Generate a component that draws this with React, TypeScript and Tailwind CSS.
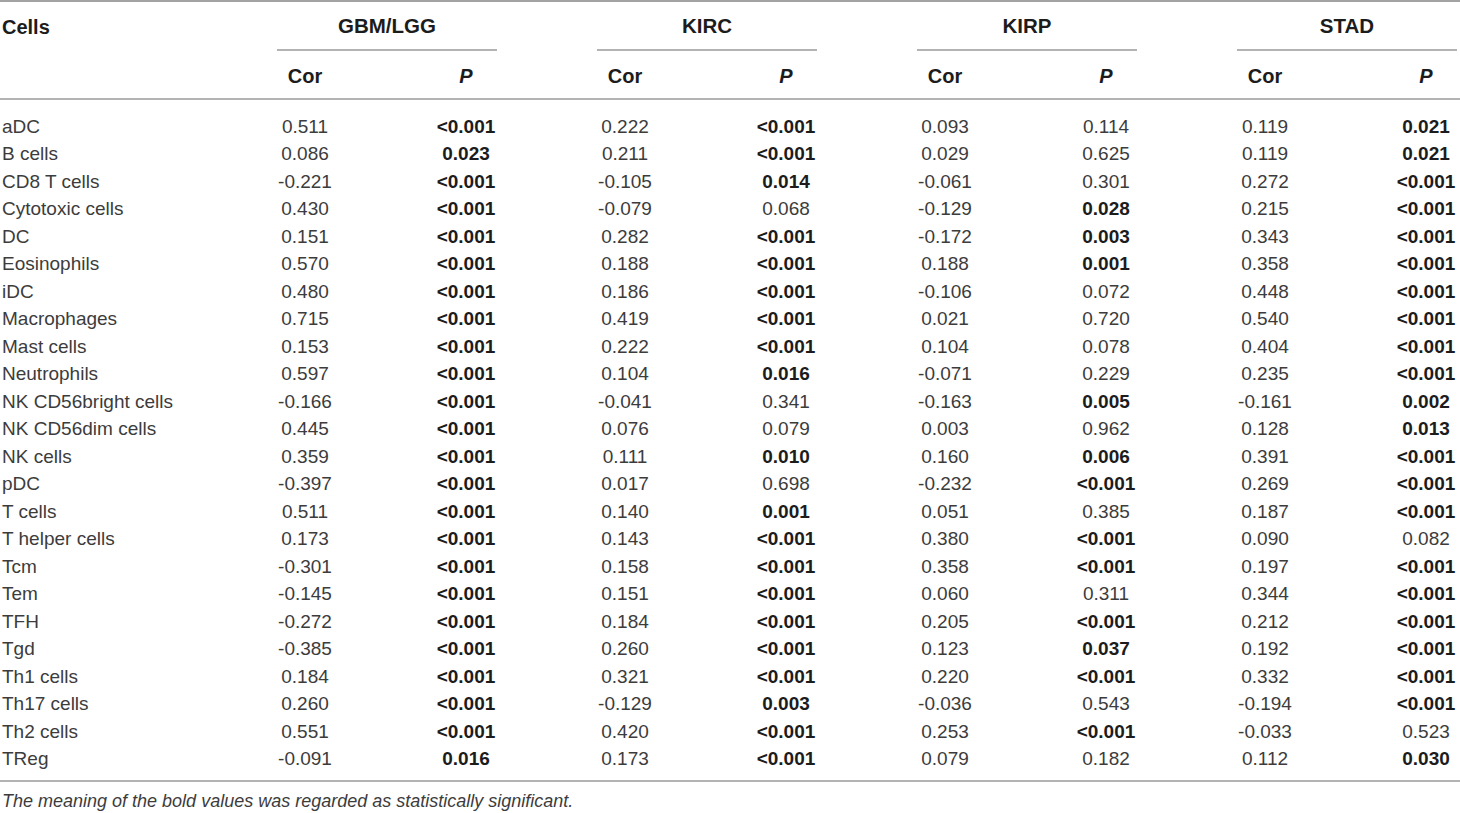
import React from "react";

type Row = [string, string[]];

const rows: Row[] = [
  ["aDC", ["0.511", "<0.001", "0.222", "<0.001", "0.093", "0.114", "0.119", "0.021"]],
  ["B cells", ["0.086", "0.023", "0.211", "<0.001", "0.029", "0.625", "0.119", "0.021"]],
  ["CD8 T cells", ["-0.221", "<0.001", "-0.105", "0.014", "-0.061", "0.301", "0.272", "<0.001"]],
  ["Cytotoxic cells", ["0.430", "<0.001", "-0.079", "0.068", "-0.129", "0.028", "0.215", "<0.001"]],
  ["DC", ["0.151", "<0.001", "0.282", "<0.001", "-0.172", "0.003", "0.343", "<0.001"]],
  ["Eosinophils", ["0.570", "<0.001", "0.188", "<0.001", "0.188", "0.001", "0.358", "<0.001"]],
  ["iDC", ["0.480", "<0.001", "0.186", "<0.001", "-0.106", "0.072", "0.448", "<0.001"]],
  ["Macrophages", ["0.715", "<0.001", "0.419", "<0.001", "0.021", "0.720", "0.540", "<0.001"]],
  ["Mast cells", ["0.153", "<0.001", "0.222", "<0.001", "0.104", "0.078", "0.404", "<0.001"]],
  ["Neutrophils", ["0.597", "<0.001", "0.104", "0.016", "-0.071", "0.229", "0.235", "<0.001"]],
  ["NK CD56bright cells", ["-0.166", "<0.001", "-0.041", "0.341", "-0.163", "0.005", "-0.161", "0.002"]],
  ["NK CD56dim cells", ["0.445", "<0.001", "0.076", "0.079", "0.003", "0.962", "0.128", "0.013"]],
  ["NK cells", ["0.359", "<0.001", "0.111", "0.010", "0.160", "0.006", "0.391", "<0.001"]],
  ["pDC", ["-0.397", "<0.001", "0.017", "0.698", "-0.232", "<0.001", "0.269", "<0.001"]],
  ["T cells", ["0.511", "<0.001", "0.140", "0.001", "0.051", "0.385", "0.187", "<0.001"]],
  ["T helper cells", ["0.173", "<0.001", "0.143", "<0.001", "0.380", "<0.001", "0.090", "0.082"]],
  ["Tcm", ["-0.301", "<0.001", "0.158", "<0.001", "0.358", "<0.001", "0.197", "<0.001"]],
  ["Tem", ["-0.145", "<0.001", "0.151", "<0.001", "0.060", "0.311", "0.344", "<0.001"]],
  ["TFH", ["-0.272", "<0.001", "0.184", "<0.001", "0.205", "<0.001", "0.212", "<0.001"]],
  ["Tgd", ["-0.385", "<0.001", "0.260", "<0.001", "0.123", "0.037", "0.192", "<0.001"]],
  ["Th1 cells", ["0.184", "<0.001", "0.321", "<0.001", "0.220", "<0.001", "0.332", "<0.001"]],
  ["Th17 cells", ["0.260", "<0.001", "-0.129", "0.003", "-0.036", "0.543", "-0.194", "<0.001"]],
  ["Th2 cells", ["0.551", "<0.001", "0.420", "<0.001", "0.253", "<0.001", "-0.033", "0.523"]],
  ["TReg", ["-0.091", "0.016", "0.173", "<0.001", "0.079", "0.182", "0.112", "0.030"]],
];

const groups = ["GBM/LGG", "KIRC", "KIRP", "STAD"];

const isSig = (p: string) => p.startsWith("<") || parseFloat(p) < 0.05;

export default function App() {
  return (
    <div
      className="w-[1460px] bg-white text-[#3c3c3c] text-[19px]"
      style={{ fontFamily: '"Liberation Sans", Arial, Helvetica, sans-serif' }}
    >
      <div className="border-t-2 border-[#a3a3a3]">
        {/* group header row */}
        <div className="flex h-[49px] items-center">
          <div className="w-[277px] pl-[2px] font-bold text-[20px] text-[#1c1c1c]">Cells</div>
          <div className="flex gap-[100px]">
            {groups.map((g) => (
              <div key={g} className="w-[220px] h-[49px] pt-[1px] flex items-center justify-center font-bold text-[20.5px] text-[#1c1c1c] border-b-2 border-[#b3b3b3]">
                {g}
              </div>
            ))}
          </div>
        </div>
        {/* sub header row */}
        <div className="flex h-[49px] pt-[3px] items-center border-b-2 border-[#b3b3b3]">
          <div className="w-[277px]" />
          <div className="flex gap-[100px]">
            {groups.map((g) => (
              <div key={g} className="w-[220px] flex justify-between font-bold text-[20px] text-[#1c1c1c]">
                <div className="w-[56px] text-center">Cor</div>
                <div className="w-[62px] text-center italic">P</div>
              </div>
            ))}
          </div>
        </div>
        {/* body */}
        <div className="pt-[13px] pb-[7px] border-b-2 border-[#b3b3b3]">
          {rows.map(([name, vals]) => (
            <div key={name} className="flex h-[27.5px] items-center">
              <div className="w-[277px] pl-[2px] whitespace-nowrap">{name}</div>
              <div className="flex gap-[100px]">
                {[0, 1, 2, 3].map((i) => {
                  const cor = vals[i * 2];
                  const p = vals[i * 2 + 1];
                  return (
                    <div key={i} className="w-[220px] flex justify-between">
                      <div className="w-[56px] flex justify-center whitespace-nowrap">{cor}</div>
                      <div className="w-[62px] flex justify-center whitespace-nowrap">
                        {isSig(p) ? <span className="font-bold text-[#1c1c1c]">{p}</span> : <span>{p}</span>}
                      </div>
                    </div>
                  );
                })}
              </div>
            </div>
          ))}
        </div>
        <div className="pl-[2px] pt-[6px] italic text-[18px] text-[#3c3c3c]">
          The meaning of the bold values was regarded as statistically significant.
        </div>
      </div>
    </div>
  );
}
